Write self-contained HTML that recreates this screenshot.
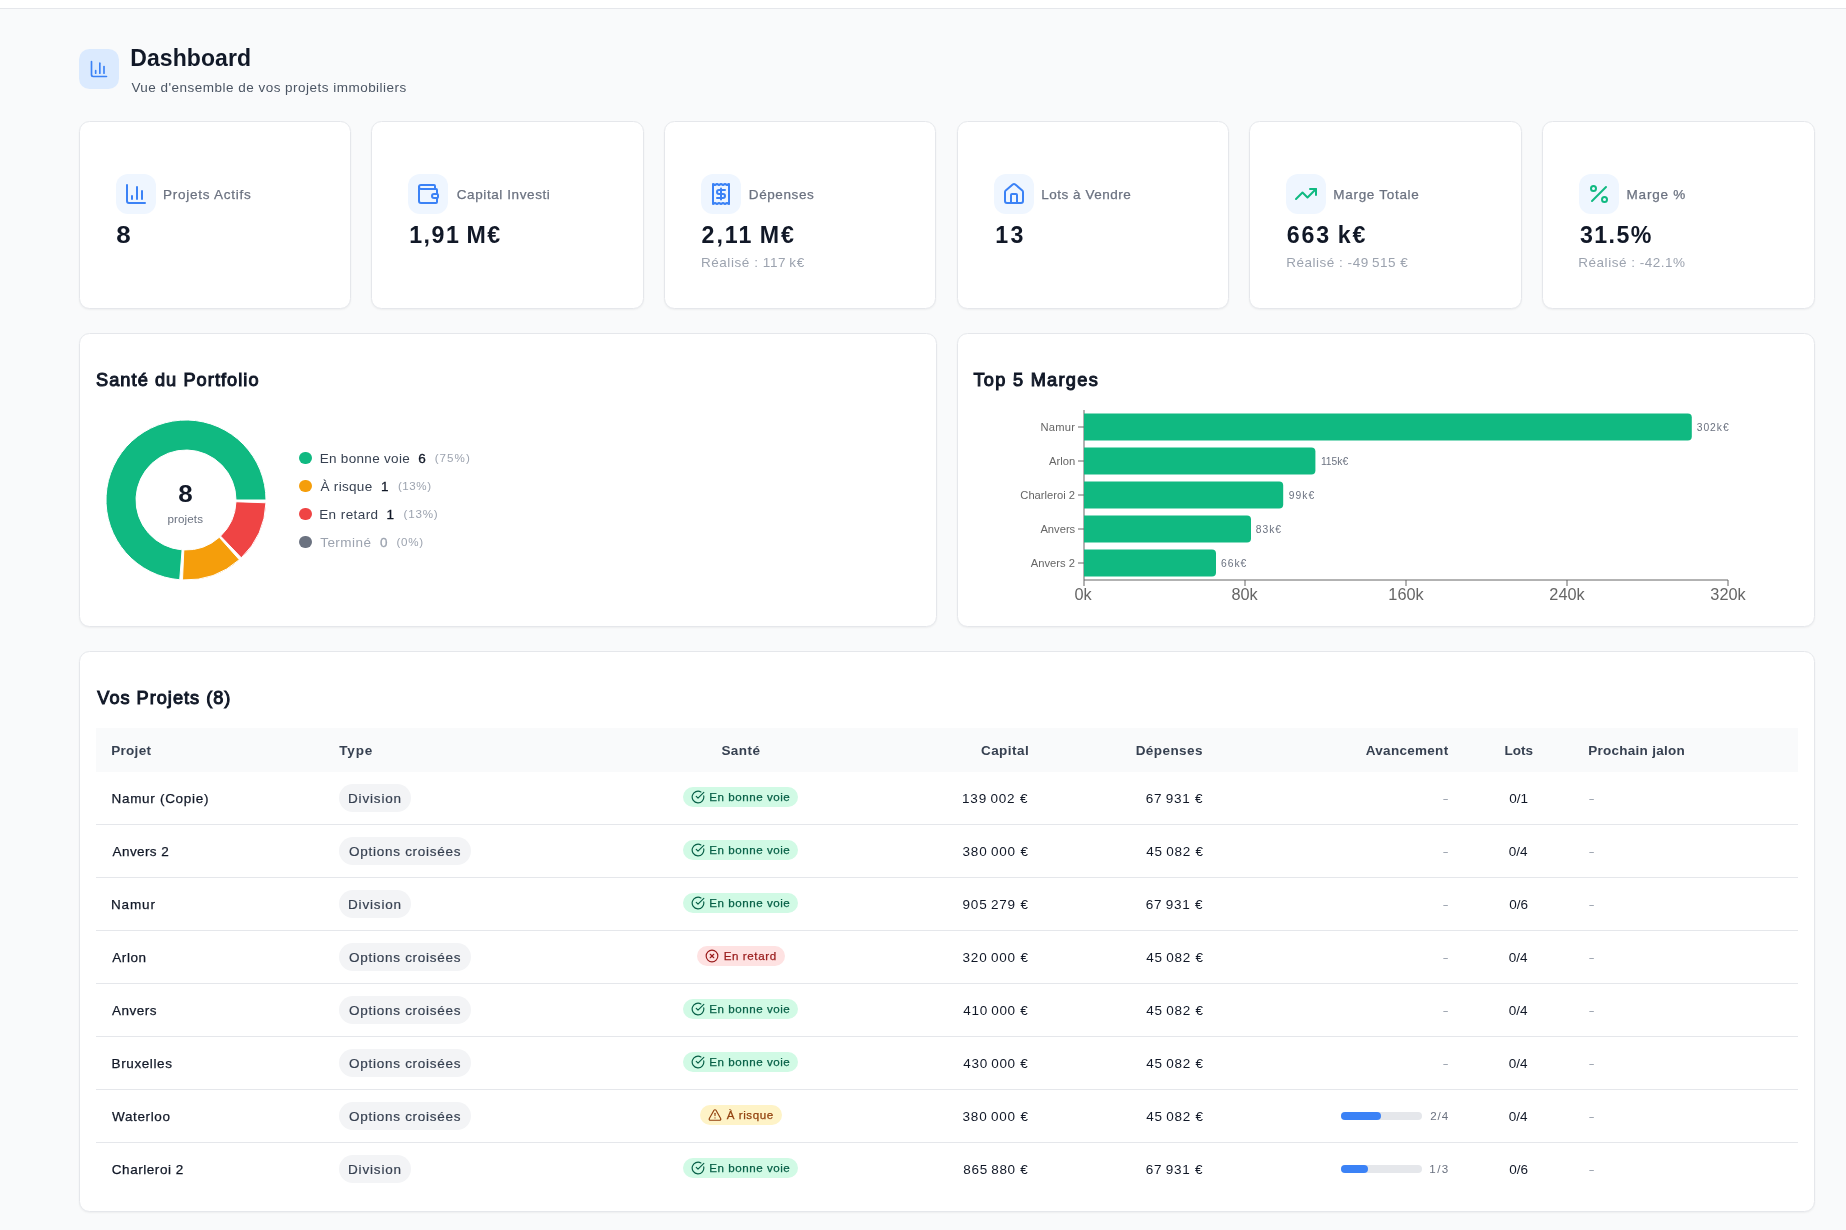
<!DOCTYPE html>
<html lang="fr">
<head>
<meta charset="utf-8">
<title>Dashboard</title>
<style>
.nm{-webkit-text-stroke:.25px #111827}
*{box-sizing:border-box;margin:0;padding:0}
html,body{width:1846px;height:1230px;overflow:hidden}
body{background:#f9fafb;font-family:"Liberation Sans",sans-serif;color:#111827;position:relative}
.topbar{position:absolute;left:0;top:0;width:1846px;height:9px;background:#fff;border-bottom:1px solid #e5e7eb}
.abs{position:absolute}
.t{position:absolute;white-space:nowrap;line-height:1;display:block}
.card{position:absolute;background:#fff;border:1px solid #e5e7eb;border-radius:10.5px;box-shadow:0 1px 2px rgba(0,0,0,.05)}
.ib{position:absolute;width:40px;height:40px;border-radius:12px;background:#eff6ff}
.ib svg{position:absolute;left:8px;top:8px;width:24px;height:24px;fill:none;stroke:#3b82f6;stroke-width:2;stroke-linecap:round;stroke-linejoin:round}
.ib.g svg{stroke:#10b981}
.lbl{font-size:13.5px;color:#6b7280;-webkit-text-stroke:.25px #6b7280}
.val{font-size:23.2px;font-weight:700;color:#111827}
.sub{font-size:13.5px;color:#9ca3af}
.h2{font-size:18.2px;font-weight:400;color:#111827;-webkit-text-stroke:1px #111827}
.thead{background:#f9fafb}
.th{font-size:13.5px;font-weight:700;color:#374151}
.td{font-size:13.5px;color:#111827}
.dash{font-size:11.6px;color:#9ca3af;-webkit-text-stroke:.3px #9ca3af;transform:scaleX(1.35);transform-origin:left}
.pill{height:28px;border-radius:14px;background:#f3f4f6}
.pt{font-size:13.5px;color:#374151;-webkit-text-stroke:.2px #374151}
.bdg{height:20px;border-radius:10px}
.bdg svg{position:absolute;left:8px;top:3px;width:14px;height:14px;fill:none;stroke:currentColor;stroke-width:2;stroke-linecap:round;stroke-linejoin:round}
.bt{font-size:11.6px;-webkit-text-stroke:.25px currentColor}
.ok{background:#d1fae5;color:#065f46}
.late{background:#fee2e2;color:#991b1b}
.risk{background:#fef3c7;color:#92400e}
.bt.ok,.bt.late,.bt.risk{background:none}
</style>
</head>
<body>
<div id="root" style="position:absolute;left:0;top:0;width:1846px;height:1230px;will-change:transform">
<div class="topbar"></div>
<div class="abs" style="left:78.6px;top:49px;width:40px;height:40px;border-radius:10.5px;background:#dbeafe">
<svg class="abs" style="left:10px;top:10px" width="20" height="20" viewBox="0 0 24 24" fill="none" stroke="#3b82f6" stroke-width="2" stroke-linecap="round" stroke-linejoin="round"><path d="M3 3v16a2 2 0 0 0 2 2h16"/><path d="M18 17V9"/><path d="M13 17V5"/><path d="M8 17v-3"/></svg></div>
<h1 class="t " id="title" style="left:130.25px;top:47.00px;font-size:23px;font-weight:700;color:#111827;letter-spacing:0.087px">Dashboard</h1>
<p class="t " id="subtitle" style="left:131.39px;top:81.00px;font-size:13.5px;color:#4b5563;letter-spacing:0.480px">Vue d'ensemble de vos projets immobiliers</p>
<div class="card" style="left:78.5px;top:121px;width:272.5px;height:188px"></div>
<div class="ib" style="left:115.5px;top:174px"><svg viewBox="0 0 24 24"><path d="M3 3v16a2 2 0 0 0 2 2h16"/><path d="M18 17V9"/><path d="M13 17V5"/><path d="M8 17v-3"/></svg></div>
<span class="t lbl" id="kl0" style="left:163.1px;top:188.00px;;letter-spacing:0.738px">Projets Actifs</span>
<span class="t val" id="kv0" style="left:116.6px;top:224.00px;transform:scaleX(1.12);transform-origin:center;">8</span>
<div class="card" style="left:371.2px;top:121px;width:272.5px;height:188px"></div>
<div class="ib" style="left:408px;top:174px"><svg viewBox="0 0 24 24"><path d="M19 7V4a1 1 0 0 0-1-1H5a2 2 0 0 0 0 4h15a1 1 0 0 1 1 1v4h-3a2 2 0 0 0 0 4h3a1 1 0 0 0 1-1v-2a1 1 0 0 0-1-1"/><path d="M3 5v14a2 2 0 0 0 2 2h15a1 1 0 0 0 1-1v-4"/></svg></div>
<span class="t lbl" id="kl1" style="left:456.75px;top:188.00px;;letter-spacing:0.593px">Capital Investi</span>
<span class="t val" id="kv1" style="left:409.18px;top:224.00px;;letter-spacing:1.500px">1,91&thinsp;M€</span>
<div class="card" style="left:663.9px;top:121px;width:272.5px;height:188px"></div>
<div class="ib" style="left:701px;top:174px"><svg viewBox="0 0 24 24"><path d="M4 2v20l2-1 2 1 2-1 2 1 2-1 2 1 2-1 2 1V2l-2 1-2-1-2 1-2-1-2 1-2-1-2 1Z"/><path d="M16 8h-6a2 2 0 1 0 0 4h4a2 2 0 1 1 0 4H8"/><path d="M12 17.500v-11"/></svg></div>
<span class="t lbl" id="kl2" style="left:748.79px;top:188.00px;;letter-spacing:0.600px">Dépenses</span>
<span class="t val" id="kv2" style="left:701.6px;top:224.00px;;letter-spacing:1.950px">2,11&thinsp;M€</span>
<span class="t sub" id="ks2" style="left:700.89px;top:256.00px;;letter-spacing:0.567px">Réalisé : 117&thinsp;k€</span>
<div class="card" style="left:956.6px;top:121px;width:272.5px;height:188px"></div>
<div class="ib" style="left:993.5px;top:174px"><svg viewBox="0 0 24 24"><path d="M15 21v-8a1 1 0 0 0-1-1h-4a1 1 0 0 0-1 1v8"/><path d="M3 10a2 2 0 0 1 .709-1.528l7-5.999a2 2 0 0 1 2.582 0l7 5.999A2 2 0 0 1 21 10v9a2 2 0 0 1-2 2H5a2 2 0 0 1-2-2z"/></svg></div>
<span class="t lbl" id="kl3" style="left:1041.25px;top:188.00px;;letter-spacing:0.517px">Lots à Vendre</span>
<span class="t val" id="kv3" style="left:995.19px;top:224.00px;;letter-spacing:2.300px">13</span>
<div class="card" style="left:1249.3px;top:121px;width:272.5px;height:188px"></div>
<div class="ib g" style="left:1286px;top:174px"><svg viewBox="0 0 24 24"><path d="M16 7h6v6"/><path d="m22 7-8.500 8.500-5-5L2 17"/></svg></div>
<span class="t lbl" id="kl4" style="left:1333.32px;top:188.00px;;letter-spacing:0.700px">Marge Totale</span>
<span class="t val" id="kv4" style="left:1286.69px;top:224.00px;;letter-spacing:1.920px">663&thinsp;k€</span>
<span class="t sub" id="ks4" style="left:1286.14px;top:256.00px;;letter-spacing:0.522px">Réalisé : -49&thinsp;515&nbsp;€</span>
<div class="card" style="left:1542.0px;top:121px;width:272.5px;height:188px"></div>
<div class="ib g" style="left:1579px;top:174px"><svg viewBox="0 0 24 24"><line x1="19" x2="5" y1="5" y2="19"/><circle cx="6.500" cy="6.500" r="2.500"/><circle cx="17.500" cy="17.500" r="2.500"/></svg></div>
<span class="t lbl" id="kl5" style="left:1626.54px;top:188.00px;;letter-spacing:0.800px">Marge %</span>
<span class="t val" id="kv5" style="left:1580.04px;top:224.00px;;letter-spacing:1.375px">31.5%</span>
<span class="t sub" id="ks5" style="left:1578.32px;top:256.00px;;letter-spacing:0.513px">Réalisé : -42.1%</span>
<div class="card" style="left:78.5px;top:333px;width:858px;height:294px"></div>
<div class="card" style="left:956.5px;top:333px;width:858px;height:294px"></div>
<div class="card" style="left:78.5px;top:651px;width:1736px;height:561px"></div>
<h2 class="t h2" id="h0" style="left:96.0px;top:371.00px;;letter-spacing:1.059px">Santé du Portfolio</h2>
<h2 class="t h2" id="h1" style="left:973.39px;top:371.00px;;letter-spacing:1.291px">Top 5 Marges</h2>
<h2 class="t h2" id="h2" style="left:97.29px;top:689.00px;;letter-spacing:0.985px">Vos Projets (8)</h2>
<svg class="abs" style="left:0;top:400px" width="300" height="200" viewBox="0 400 300 200">
<path d="M266.00 500.00A80 80 0 1 0 179.72 579.75L182.08 549.85A50 50 0 1 1 236.00 500.00Z" fill="#10b981" stroke="#fff" stroke-width="1"/>
<path d="M182.51 579.92A80 80 0 0 0 239.27 559.68L219.29 537.30A50 50 0 0 1 183.82 549.95Z" fill="#f59e0b" stroke="#fff" stroke-width="1"/>
<path d="M241.32 557.79A80 80 0 0 0 265.95 502.79L235.97 501.74A50 50 0 0 1 220.58 536.12Z" fill="#ef4444" stroke="#fff" stroke-width="1"/>
</svg>
<span class="t " id="d8" style="left:179.19px;top:483.00px;font-size:23.2px;font-weight:700;color:#111827;transform:scaleX(1.12);transform-origin:center;">8</span>
<span class="t " id="dp" style="left:167.43px;top:513.00px;font-size:11.6px;color:#6b7280;letter-spacing:0.117px">projets</span>
<div class="abs" style="left:299.3px;top:451.8px;width:12.4px;height:12.4px;border-radius:50%;background:#10b981"></div>
<span class="t " id="ln0" style="left:319.69px;top:452.00px;font-size:13.5px;color:#374151;letter-spacing:0.308px">En bonne voie</span>
<span class="t " id="lv0" style="left:418.22px;top:452.00px;font-size:13.5px;color:#111827;-webkit-text-stroke:.3px #111827">6</span>
<span class="t " id="lp0" style="left:434.69px;top:452.00px;font-size:11.6px;color:#9ca3af;letter-spacing:1.050px">(75%)</span>
<div class="abs" style="left:299.3px;top:479.8px;width:12.4px;height:12.4px;border-radius:50%;background:#f59e0b"></div>
<span class="t " id="ln1" style="left:320.46px;top:480.00px;font-size:13.5px;color:#374151;letter-spacing:0.314px">À risque</span>
<span class="t " id="lv1" style="left:381.0px;top:480.00px;font-size:13.5px;color:#111827;-webkit-text-stroke:.3px #111827">1</span>
<span class="t " id="lp1" style="left:397.99px;top:480.00px;font-size:11.6px;color:#9ca3af;letter-spacing:0.525px">(13%)</span>
<div class="abs" style="left:299.3px;top:507.8px;width:12.4px;height:12.4px;border-radius:50%;background:#ef4444"></div>
<span class="t " id="ln2" style="left:319.19px;top:508.00px;font-size:13.5px;color:#374151;letter-spacing:0.425px">En retard</span>
<span class="t " id="lv2" style="left:386.5px;top:508.00px;font-size:13.5px;color:#111827;-webkit-text-stroke:.3px #111827">1</span>
<span class="t " id="lp2" style="left:403.59px;top:508.00px;font-size:11.6px;color:#9ca3af;letter-spacing:0.800px">(13%)</span>
<div class="abs" style="left:299.3px;top:535.8px;width:12.4px;height:12.4px;border-radius:50%;background:#6b7280"></div>
<span class="t " id="ln3" style="left:320.19px;top:536.00px;font-size:13.5px;color:#9ca3af;letter-spacing:0.450px">Terminé</span>
<span class="t " id="lv3" style="left:379.88px;top:536.00px;font-size:13.5px;color:#9ca3af;-webkit-text-stroke:.3px #9ca3af">0</span>
<span class="t " id="lp3" style="left:396.58px;top:536.00px;font-size:11.6px;color:#9ca3af;letter-spacing:0.667px">(0%)</span>
<svg class="abs" style="left:960px;top:400px" width="850" height="220" viewBox="960 400 850 220" font-family="Liberation Sans, sans-serif">
<line x1="1084" x2="1084" y1="410" y2="580" stroke="#666"/>
<line x1="1084" x2="1728" y1="580" y2="580" stroke="#666"/>
<path d="M1084 413.4h603.8a4 4 0 0 1 4 4v19.2a4 4 0 0 1 -4 4h-603.8z" fill="#10b981"/>
<line x1="1078" x2="1084" y1="427" y2="427" stroke="#666"/>
<text id="by0" x="1040.6" y="431.4" font-size="11.2" fill="#666" letter-spacing="0.175">Namur</text>
<text id="bv0" x="1696.7" y="430.8" font-size="10.3" fill="#6b7280" letter-spacing="0.975">302k€</text>
<path d="M1084 447.4h227.4a4 4 0 0 1 4 4v19.2a4 4 0 0 1 -4 4h-227.4z" fill="#10b981"/>
<line x1="1078" x2="1084" y1="461" y2="461" stroke="#666"/>
<text id="by1" x="1048.9" y="465.4" font-size="11.2" fill="#666" letter-spacing="0.050">Arlon</text>
<text id="bv1" x="1320.9" y="464.8" font-size="10.3" fill="#6b7280">115k€</text>
<path d="M1084 481.4h195.2a4 4 0 0 1 4 4v19.2a4 4 0 0 1 -4 4h-195.2z" fill="#10b981"/>
<line x1="1078" x2="1084" y1="495" y2="495" stroke="#666"/>
<text id="by2" x="1020.3" y="499.4" font-size="11.2" fill="#666">Charleroi 2</text>
<text id="bv2" x="1288.7" y="498.8" font-size="10.3" fill="#6b7280" letter-spacing="1.100">99k€</text>
<path d="M1084 515.4h163.0a4 4 0 0 1 4 4v19.2a4 4 0 0 1 -4 4h-163.0z" fill="#10b981"/>
<line x1="1078" x2="1084" y1="529" y2="529" stroke="#666"/>
<text id="by3" x="1040.4" y="533.4" font-size="11.2" fill="#666">Anvers</text>
<text id="bv3" x="1255.75" y="532.8" font-size="10.3" fill="#6b7280" letter-spacing="1.000">83k€</text>
<path d="M1084 549.4h128.0a4 4 0 0 1 4 4v19.2a4 4 0 0 1 -4 4h-128.0z" fill="#10b981"/>
<line x1="1078" x2="1084" y1="563" y2="563" stroke="#666"/>
<text id="by4" x="1030.85" y="567.4" font-size="11.2" fill="#666">Anvers 2</text>
<text id="bv4" x="1221.0" y="566.8" font-size="10.3" fill="#6b7280" letter-spacing="1.000">66k€</text>
<line x1="1084" x2="1084" y1="580" y2="586" stroke="#666"/>
<text id="bx0" x="1083.1" y="599.8" text-anchor="middle" font-size="16.3" fill="#666">0k</text>
<line x1="1245" x2="1245" y1="580" y2="586" stroke="#666"/>
<text id="bx1" x="1244.6" y="599.8" text-anchor="middle" font-size="16.3" fill="#666">80k</text>
<line x1="1406" x2="1406" y1="580" y2="586" stroke="#666"/>
<text id="bx2" x="1406" y="599.8" text-anchor="middle" font-size="16.3" fill="#666">160k</text>
<line x1="1567" x2="1567" y1="580" y2="586" stroke="#666"/>
<text id="bx3" x="1567" y="599.8" text-anchor="middle" font-size="16.3" fill="#666">240k</text>
<line x1="1728" x2="1728" y1="580" y2="586" stroke="#666"/>
<text id="bx4" x="1728" y="599.8" text-anchor="middle" font-size="16.3" fill="#666">320k</text>
</svg>
<div class="abs thead" style="left:95.5px;top:728px;width:1702px;height:44px"></div>
<span class="t th" id="th0" style="left:111.14px;top:744.00px;;letter-spacing:0.320px">Projet</span>
<span class="t th" id="th1" style="left:339.33px;top:744.00px;;letter-spacing:0.800px">Type</span>
<span class="t th" id="th2" style="left:721.39px;top:744.00px;;letter-spacing:0.450px">Santé</span>
<span class="t th" id="th3" style="left:980.93px;top:744.00px;;letter-spacing:0.467px">Capital</span>
<span class="t th" id="th4" style="left:1135.68px;top:744.00px;;letter-spacing:0.429px">Dépenses</span>
<span class="t th" id="th5" style="left:1365.75px;top:744.00px;;letter-spacing:0.288px">Avancement</span>
<span class="t th" id="th6" style="left:1504.5px;top:744.00px;">Lots</span>
<span class="t th" id="th7" style="left:1588.14px;top:744.00px;;letter-spacing:0.277px">Prochain jalon</span>
<div class="abs" style="left:95.5px;top:824px;width:1702px;height:1px;background:#e5e7eb"></div>
<span class="t td nm" id="n0" style="left:111.5px;top:792.00px;;letter-spacing:0.700px">Namur (Copie)</span>
<div class="abs pill" style="left:339px;top:784.0px;width:72px"></div>
<span class="t pt" id="ty0" style="left:348.0px;top:792.00px;;letter-spacing:0.829px">Division</span>
<div class="abs bdg ok" style="left:683.4px;top:787px;width:115.1px"><svg viewBox="0 0 24 24"><path d="M21.801 10A10 10 0 1 1 17 3.335"/><path d="m9 11 3 3L22 4"/></svg></div>
<span class="t bt ok" id="b0" style="left:709.32px;top:791.00px;;letter-spacing:0.525px">En bonne voie</span>
<span class="t td" id="cp0" style="left:962.0px;top:792.00px;;letter-spacing:0.812px">139&thinsp;002&nbsp;€</span>
<span class="t td" id="de0" style="left:1145.79px;top:792.00px;;letter-spacing:0.743px">67&thinsp;931&nbsp;€</span>
<span class="t dash" id="da0" style="left:1442.8px;top:792.00px;font-size:11.6px;">-</span>
<span class="t td" id="lo0" style="left:1509.29px;top:792.00px;">0/1</span>
<span class="t dash" id="db0" style="left:1589px;top:792.00px;font-size:11.6px;">-</span>
<div class="abs" style="left:95.5px;top:877px;width:1702px;height:1px;background:#e5e7eb"></div>
<span class="t td nm" id="n1" style="left:112.6px;top:845.00px;;letter-spacing:0.400px">Anvers 2</span>
<div class="abs pill" style="left:339px;top:837.0px;width:131.5px"></div>
<span class="t pt" id="ty1" style="left:349.1px;top:845.00px;;letter-spacing:0.720px">Options croisées</span>
<div class="abs bdg ok" style="left:683.4px;top:840px;width:115.1px"><svg viewBox="0 0 24 24"><path d="M21.801 10A10 10 0 1 1 17 3.335"/><path d="m9 11 3 3L22 4"/></svg></div>
<span class="t bt ok" id="b1" style="left:709.32px;top:844.00px;;letter-spacing:0.525px">En bonne voie</span>
<span class="t td" id="cp1" style="left:962.5px;top:845.00px;;letter-spacing:0.812px">380&thinsp;000&nbsp;€</span>
<span class="t td" id="de1" style="left:1146.29px;top:845.00px;;letter-spacing:0.743px">45&thinsp;082&nbsp;€</span>
<span class="t dash" id="da1" style="left:1442.8px;top:845.00px;font-size:11.6px;">-</span>
<span class="t td" id="lo1" style="left:1508.79px;top:845.00px;">0/4</span>
<span class="t dash" id="db1" style="left:1589px;top:845.00px;font-size:11.6px;">-</span>
<div class="abs" style="left:95.5px;top:930px;width:1702px;height:1px;background:#e5e7eb"></div>
<span class="t td nm" id="n2" style="left:111.0px;top:898.00px;;letter-spacing:0.850px">Namur</span>
<div class="abs pill" style="left:339px;top:890.0px;width:72px"></div>
<span class="t pt" id="ty2" style="left:348.0px;top:898.00px;;letter-spacing:0.829px">Division</span>
<div class="abs bdg ok" style="left:683.4px;top:893px;width:115.1px"><svg viewBox="0 0 24 24"><path d="M21.801 10A10 10 0 1 1 17 3.335"/><path d="m9 11 3 3L22 4"/></svg></div>
<span class="t bt ok" id="b2" style="left:709.32px;top:897.00px;;letter-spacing:0.525px">En bonne voie</span>
<span class="t td" id="cp2" style="left:962.5px;top:898.00px;;letter-spacing:0.812px">905&thinsp;279&nbsp;€</span>
<span class="t td" id="de2" style="left:1145.79px;top:898.00px;;letter-spacing:0.743px">67&thinsp;931&nbsp;€</span>
<span class="t dash" id="da2" style="left:1442.8px;top:898.00px;font-size:11.6px;">-</span>
<span class="t td" id="lo2" style="left:1509.29px;top:898.00px;">0/6</span>
<span class="t dash" id="db2" style="left:1589px;top:898.00px;font-size:11.6px;">-</span>
<div class="abs" style="left:95.5px;top:983px;width:1702px;height:1px;background:#e5e7eb"></div>
<span class="t td nm" id="n3" style="left:112.19px;top:951.00px;;letter-spacing:0.600px">Arlon</span>
<div class="abs pill" style="left:339px;top:943.0px;width:131.5px"></div>
<span class="t pt" id="ty3" style="left:349.1px;top:951.00px;;letter-spacing:0.720px">Options croisées</span>
<div class="abs bdg late" style="left:697.3px;top:946px;width:87.3px"><svg viewBox="0 0 24 24"><circle cx="12" cy="12" r="10"/><path d="m15 9-6 6"/><path d="m9 9 6 6"/></svg></div>
<span class="t bt late" id="b3" style="left:723.69px;top:950.00px;;letter-spacing:0.588px">En retard</span>
<span class="t td" id="cp3" style="left:962.5px;top:951.00px;;letter-spacing:0.812px">320&thinsp;000&nbsp;€</span>
<span class="t td" id="de3" style="left:1146.29px;top:951.00px;;letter-spacing:0.743px">45&thinsp;082&nbsp;€</span>
<span class="t dash" id="da3" style="left:1442.8px;top:951.00px;font-size:11.6px;">-</span>
<span class="t td" id="lo3" style="left:1508.79px;top:951.00px;">0/4</span>
<span class="t dash" id="db3" style="left:1589px;top:951.00px;font-size:11.6px;">-</span>
<div class="abs" style="left:95.5px;top:1036px;width:1702px;height:1px;background:#e5e7eb"></div>
<span class="t td nm" id="n4" style="left:111.89px;top:1004.00px;;letter-spacing:0.520px">Anvers</span>
<div class="abs pill" style="left:339px;top:996.0px;width:131.5px"></div>
<span class="t pt" id="ty4" style="left:349.1px;top:1004.00px;;letter-spacing:0.720px">Options croisées</span>
<div class="abs bdg ok" style="left:683.4px;top:999px;width:115.1px"><svg viewBox="0 0 24 24"><path d="M21.801 10A10 10 0 1 1 17 3.335"/><path d="m9 11 3 3L22 4"/></svg></div>
<span class="t bt ok" id="b4" style="left:709.32px;top:1003.00px;;letter-spacing:0.525px">En bonne voie</span>
<span class="t td" id="cp4" style="left:963.25px;top:1004.00px;;letter-spacing:0.688px">410&thinsp;000&nbsp;€</span>
<span class="t td" id="de4" style="left:1146.29px;top:1004.00px;;letter-spacing:0.743px">45&thinsp;082&nbsp;€</span>
<span class="t dash" id="da4" style="left:1442.8px;top:1004.00px;font-size:11.6px;">-</span>
<span class="t td" id="lo4" style="left:1508.79px;top:1004.00px;">0/4</span>
<span class="t dash" id="db4" style="left:1589px;top:1004.00px;font-size:11.6px;">-</span>
<div class="abs" style="left:95.5px;top:1089px;width:1702px;height:1px;background:#e5e7eb"></div>
<span class="t td nm" id="n5" style="left:111.6px;top:1057.00px;;letter-spacing:0.600px">Bruxelles</span>
<div class="abs pill" style="left:339px;top:1049.0px;width:131.5px"></div>
<span class="t pt" id="ty5" style="left:349.1px;top:1057.00px;;letter-spacing:0.720px">Options croisées</span>
<div class="abs bdg ok" style="left:683.4px;top:1052px;width:115.1px"><svg viewBox="0 0 24 24"><path d="M21.801 10A10 10 0 1 1 17 3.335"/><path d="m9 11 3 3L22 4"/></svg></div>
<span class="t bt ok" id="b5" style="left:709.32px;top:1056.00px;;letter-spacing:0.525px">En bonne voie</span>
<span class="t td" id="cp5" style="left:963.25px;top:1057.00px;;letter-spacing:0.688px">430&thinsp;000&nbsp;€</span>
<span class="t td" id="de5" style="left:1146.29px;top:1057.00px;;letter-spacing:0.743px">45&thinsp;082&nbsp;€</span>
<span class="t dash" id="da5" style="left:1442.8px;top:1057.00px;font-size:11.6px;">-</span>
<span class="t td" id="lo5" style="left:1508.79px;top:1057.00px;">0/4</span>
<span class="t dash" id="db5" style="left:1589px;top:1057.00px;font-size:11.6px;">-</span>
<div class="abs" style="left:95.5px;top:1142px;width:1702px;height:1px;background:#e5e7eb"></div>
<span class="t td nm" id="n6" style="left:112.1px;top:1110.00px;;letter-spacing:0.614px">Waterloo</span>
<div class="abs pill" style="left:339px;top:1102.0px;width:131.5px"></div>
<span class="t pt" id="ty6" style="left:349.1px;top:1110.00px;;letter-spacing:0.720px">Options croisées</span>
<div class="abs bdg risk" style="left:700px;top:1105px;width:81.8px"><svg viewBox="0 0 24 24"><path d="m21.730 18-8-14a2 2 0 0 0-3.480 0l-8 14A2 2 0 0 0 4 21h16a2 2 0 0 0 1.730-3"/><path d="M12 9v4"/><path d="M12 17h.01"/></svg></div>
<span class="t bt risk" id="b6" style="left:726.79px;top:1109.00px;;letter-spacing:0.543px">À risque</span>
<span class="t td" id="cp6" style="left:962.5px;top:1110.00px;;letter-spacing:0.812px">380&thinsp;000&nbsp;€</span>
<span class="t td" id="de6" style="left:1146.29px;top:1110.00px;;letter-spacing:0.743px">45&thinsp;082&nbsp;€</span>
<div class="abs" style="left:1341.4px;top:1112px;width:80.3px;height:8px;border-radius:4px;background:#e5e7eb"><div style="width:40.0px;height:8px;border-radius:4px;background:#3b82f6"></div></div>
<span class="t " id="pg6" style="left:1430.19px;top:1110.00px;font-size:11.6px;color:#6b7280;letter-spacing:0.900px">2/4</span>
<span class="t td" id="lo6" style="left:1508.79px;top:1110.00px;">0/4</span>
<span class="t dash" id="db6" style="left:1589px;top:1110.00px;font-size:11.6px;">-</span>
<span class="t td nm" id="n7" style="left:111.79px;top:1163.00px;;letter-spacing:0.550px">Charleroi 2</span>
<div class="abs pill" style="left:339px;top:1155.0px;width:72px"></div>
<span class="t pt" id="ty7" style="left:348.0px;top:1163.00px;;letter-spacing:0.829px">Division</span>
<div class="abs bdg ok" style="left:683.4px;top:1158px;width:115.1px"><svg viewBox="0 0 24 24"><path d="M21.801 10A10 10 0 1 1 17 3.335"/><path d="m9 11 3 3L22 4"/></svg></div>
<span class="t bt ok" id="b7" style="left:709.32px;top:1162.00px;;letter-spacing:0.525px">En bonne voie</span>
<span class="t td" id="cp7" style="left:963.25px;top:1163.00px;;letter-spacing:0.688px">865&thinsp;880&nbsp;€</span>
<span class="t td" id="de7" style="left:1145.79px;top:1163.00px;;letter-spacing:0.743px">67&thinsp;931&nbsp;€</span>
<div class="abs" style="left:1341.4px;top:1165px;width:80.3px;height:8px;border-radius:4px;background:#e5e7eb"><div style="width:26.7px;height:8px;border-radius:4px;background:#3b82f6"></div></div>
<span class="t " id="pg7" style="left:1429.29px;top:1163.00px;font-size:11.6px;color:#6b7280;letter-spacing:1.400px">1/3</span>
<span class="t td" id="lo7" style="left:1509.29px;top:1163.00px;">0/6</span>
<span class="t dash" id="db7" style="left:1589px;top:1163.00px;font-size:11.6px;">-</span>
</div>
</body>
</html>
